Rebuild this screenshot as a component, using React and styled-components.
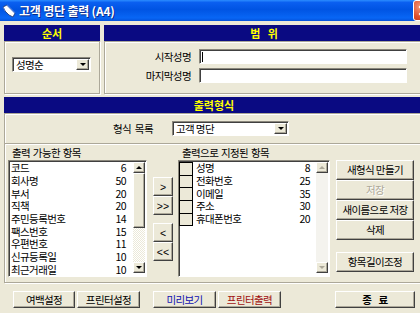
import React from 'react';
import styled, { createGlobalStyle, css } from 'styled-components';

const available = [
  ['코드', 6],
  ['회사명', 50],
  ['부서', 20],
  ['직책', 20],
  ['주민등록번호', 14],
  ['팩스번호', 15],
  ['우편번호', 11],
  ['신규등록일', 10],
  ['최근거래일', 10],
];

const selected = [
  ['성명', 8],
  ['전화번호', 25],
  ['이메일', 35],
  ['주소', 30],
  ['휴대폰번호', 20],
];

const GlobalStyle = createGlobalStyle`
  html, body {
    margin: 0;
    padding: 0;
    overflow: hidden;
    background: #ece9d8;
  }
  body {
    font-family: "Noto Sans CJK KR", "Noto Sans", sans-serif;
    font-size: 10.5px;
    line-height: 12px;
    letter-spacing: -0.6px;
    color: #000;
  }
  #root {
    width: 420px;
    height: 313px;
    overflow: hidden;
  }
  * { box-sizing: border-box; }
`;

const Window = styled.div`
  width: 440px;
  height: 313px;
  display: flex;
  flex-direction: column;
  background: #ece9d8;
`;

const TitleBar = styled.div`
  height: 21px;
  display: flex;
  align-items: center;
  gap: 3px;
  padding: 0 6px 0 2px;
  background: linear-gradient(
    to bottom,
    #2b8cff 0%,
    #0a5ff0 12%,
    #0054e3 45%,
    #0866f5 85%,
    #0453dd 100%
  );
`;

const TitleText = styled.span`
  flex: 1;
  color: #fff;
  font-weight: bold;
  font-size: 12px;
  letter-spacing: -0.2px;
  text-shadow: 1px 1px #0a2a8a;
`;

const CloseButton = styled.div`
  width: 21px;
  height: 21px;
  border: 1px solid #fff;
  border-radius: 3px;
  background: radial-gradient(circle at 35% 30%, #f29a7a, #e0512e 55%, #c1361a);
  display: flex;
  align-items: center;
  justify-content: center;
`;

const Body = styled.div`
  width: 424px;
  padding: 4px 0 0 4px;
  display: flex;
  flex-direction: column;
`;

const TopRow = styled.div`
  display: flex;
  gap: 4px;
  height: 69px;
`;

const Panel = styled.div`
  display: flex;
  flex-direction: column;
  width: ${(p) => (p.$w ? `${p.$w}px` : 'auto')};
  flex: ${(p) => (p.$w ? 'none' : '1')};
  margin-top: ${(p) => p.$mt || 0}px;
`;

const PanelHeader = styled.div`
  height: 16px;
  background: #0a0a82;
  color: #ffff00;
  font-weight: bold;
  font-size: 11px;
  letter-spacing: 0;
  display: flex;
  align-items: center;
  justify-content: center;
  white-space: pre;
`;

const PanelBody = styled.div`
  flex: 1;
  border: 1px solid #aca899;
  box-shadow: inset 1px 1px #fff, 1px 1px #fff;
  display: flex;
  flex-direction: column;
  padding: ${(p) => p.$pad || '0'};
  gap: ${(p) => p.$gap || 0}px;
`;

const sunken = css`
  background: #fff;
  border: 1px solid;
  border-color: #8a877c #fff #fff #8a877c;
  box-shadow: inset 1px 1px #404040;
`;

const Combo = styled.div`
  ${sunken};
  width: ${(p) => p.$w}px;
  height: 15px;
  display: flex;
  align-items: center;
  padding: 1px 1px 1px 3px;
`;

const ComboText = styled.span`
  flex: 1;
`;

const raised = css`
  background: #ece9d8;
  border: 1px solid;
  border-color: #fff #404040 #404040 #fff;
  box-shadow: inset -1px -1px #aca899;
`;

const DropButton = styled.span`
  ${raised};
  width: 13px;
  height: 11px;
  display: flex;
  align-items: center;
  justify-content: center;
`;

const Triangle = styled.span`
  width: 0;
  height: 0;
  border-left: 3px solid transparent;
  border-right: 3px solid transparent;
  ${(p) =>
    p.$up
      ? css`border-bottom: 3px solid ${p.$off ? '#aca899' : '#000'};`
      : css`border-top: 3px solid ${p.$off ? '#aca899' : '#000'};`}
`;

const FieldRow = styled.div`
  display: flex;
  align-items: center;
  gap: 8px;
`;

const FieldLabel = styled.span`
  width: 86px;
  text-align: right;
`;

const TextBox = styled.div`
  ${sunken};
  width: 208px;
  height: 15px;
  display: flex;
  align-items: center;
  padding-left: 2px;
`;

const Caret = styled.span`
  width: 1px;
  height: 10px;
  background: #000;
`;

const FormatRow = styled.div`
  display: flex;
  align-items: center;
  height: 15px;
  margin-top: 7px;
  padding-left: 108px;
`;

const FormatLabel = styled.span`
  width: 59px;
  word-spacing: 2px;
`;

const Separator = styled.div`
  height: 2px;
  margin-top: 7px;
  border-top: 1px solid #aca899;
  border-bottom: 1px solid #fff;
`;

const ListsRow = styled.div`
  display: flex;
  padding-left: 3px;
`;

const Column = styled.div`
  width: ${(p) => p.$w}px;
  margin-right: ${(p) => p.$mr || 0}px;
  display: flex;
  flex-direction: column;
  padding-top: ${(p) => p.$pt || 0}px;
  gap: ${(p) => p.$gap || 0}px;
`;

const ColumnLabel = styled.div`
  height: 15px;
  line-height: 15px;
  padding-left: 4px;
  word-spacing: 1px;
`;

const ListBox = styled.div`
  ${sunken};
  height: 117px;
  display: flex;
`;

const ListRows = styled.div`
  flex: 1;
  padding: 1px ${(p) => p.$pr}px 0 ${(p) => p.$pl}px;
`;

const Item = styled.div`
  height: 12.7px;
  line-height: 12px;
  display: flex;
  align-items: center;
`;

const ItemName = styled.span`
  flex: 1;
`;

const CheckCell = styled.span`
  width: 14px;
  height: 13.7px;
  margin-bottom: -1px;
  border: 1px solid #000;
  background: #ece9d8;
  margin-right: 3px;
  align-self: flex-start;
`;

const ScrollBar = styled.div`
  width: 12px;
  display: flex;
  flex-direction: column;
  padding: 1px 0 3px;
  margin-right: 1px;
`;

const ScrollArrow = styled.div`
  ${raised};
  height: 11px;
  display: flex;
  align-items: center;
  justify-content: center;
`;

const ScrollThumb = styled.div`
  ${raised};
  height: 55px;
`;

const ScrollTrack = styled.div`
  flex: 1;
  background: ${(p) =>
    p.$off
      ? '#f4f3ee'
      : 'repeating-conic-gradient(#ece9d8 0 25%, #fff 0 50%) 0 0 / 2px 2px'};
`;

const Button = styled.button`
  ${raised};
  width: ${(p) => p.$w || 78}px;
  height: ${(p) => p.$h || 20}px;
  margin: 0;
  padding: 0;
  font-family: ${(p) =>
    p.$latin ? '"Liberation Sans", sans-serif' : '"Noto Sans CJK KR", sans-serif'};
  font-size: 10.5px;
  line-height: 12px;
  letter-spacing: ${(p) => (p.$latin ? '0' : '-0.6px')};
  font-weight: ${(p) => (p.$bold ? 'bold' : 'normal')};
  color: ${(p) => p.$color || '#000'};
  white-space: pre;
  ${(p) =>
    p.disabled &&
    css`
      color: #aca899;
      text-shadow: 1px 1px #fff;
    `}
`;

const ArrowGroup = styled.div`
  display: flex;
  flex-direction: column;
`;

const Footer = styled.div`
  display: flex;
  align-items: center;
  margin-top: 8px;
  padding: 0 9px;
  height: 17px;
`;

const ButtonPair = styled.div`
  display: flex;
  gap: 2px;
  margin-right: ${(p) => p.$mr || 0}px;
`;

const Spacer = styled.div`
  flex: 1;
`;

const AppIcon = () => (
  <svg width="14" height="14" viewBox="0 0 14 14">
    <path d="M1 3 L5 1 L13 9 L11 13 L7 11 L3 7 Z" fill="#fff" stroke="#1a2f6a" strokeWidth="0.8" />
    <path d="M5 1 L13 9" stroke="#4a7ad8" strokeWidth="1.2" />
    <path d="M1 3 L3 7" stroke="#4a7ad8" strokeWidth="1" />
  </svg>
);

const CloseX = () => (
  <svg width="11" height="11" viewBox="0 0 11 11">
    <path d="M2 2 L9 9 M9 2 L2 9" stroke="#fff" strokeWidth="2" strokeLinecap="square" />
  </svg>
);

export default function App() {
  return (
    <>
      <GlobalStyle />
      <Window>
        <TitleBar>
          <AppIcon />
          <TitleText>고객 명단 출력 (A4)</TitleText>
          <CloseButton>
            <CloseX />
          </CloseButton>
        </TitleBar>
        <Body>
          <TopRow>
            <Panel $w={96}>
              <PanelHeader>순서</PanelHeader>
              <PanelBody $pad="15px 0 0 7px">
                <Combo $w={79}>
                  <ComboText>성명순</ComboText>
                  <DropButton>
                    <Triangle />
                  </DropButton>
                </Combo>
              </PanelBody>
            </Panel>
            <Panel>
              <PanelHeader>{'범   위'}</PanelHeader>
              <PanelBody $pad="7px 0 0 0" $gap={4}>
                <FieldRow>
                  <FieldLabel>시작성명</FieldLabel>
                  <TextBox>
                    <Caret />
                  </TextBox>
                </FieldRow>
                <FieldRow>
                  <FieldLabel>마지막성명</FieldLabel>
                  <TextBox />
                </FieldRow>
              </PanelBody>
            </Panel>
          </TopRow>

          <Panel $mt={3}>
            <PanelHeader>출력형식</PanelHeader>
            <PanelBody $pad="0 0 5px 0">
              <FormatRow>
                <FormatLabel>형식 목록</FormatLabel>
                <Combo $w={117}>
                  <ComboText>고객 명단</ComboText>
                  <DropButton>
                    <Triangle />
                  </DropButton>
                </Combo>
              </FormatRow>
              <Separator />
              <ListsRow>
                <Column $w={139} $mr={6}>
                  <ColumnLabel>출력 가능한 항목</ColumnLabel>
                  <ListBox>
                    <ListRows $pl={2} $pr={7}>
                      {available.map(([name, size]) => (
                        <Item key={name}>
                          <ItemName>{name}</ItemName>
                          <span>{size}</span>
                        </Item>
                      ))}
                    </ListRows>
                    <ScrollBar>
                      <ScrollArrow>
                        <Triangle $up />
                      </ScrollArrow>
                      <ScrollThumb />
                      <ScrollTrack />
                      <ScrollArrow>
                        <Triangle />
                      </ScrollArrow>
                    </ScrollBar>
                  </ListBox>
                </Column>

                <Column $w={20} $mr={5} $pt={32} $gap={8}>
                  <ArrowGroup>
                    <Button $w={20} $h={19} $latin>{'>'}</Button>
                    <Button $w={20} $h={19} $latin>{'>>'}</Button>
                  </ArrowGroup>
                  <ArrowGroup>
                    <Button $w={20} $h={19} $latin>{'<'}</Button>
                    <Button $w={20} $h={19} $latin>{'<<'}</Button>
                  </ArrowGroup>
                </Column>

                <Column $w={152} $mr={6}>
                  <ColumnLabel>출력으로 지정된 항목</ColumnLabel>
                  <ListBox>
                    <ListRows $pl={0} $pr={6}>
                      {selected.map(([name, size]) => (
                        <Item key={name}>
                          <CheckCell />
                          <ItemName>{name}</ItemName>
                          <span>{size}</span>
                        </Item>
                      ))}
                    </ListRows>
                    <ScrollBar>
                      <ScrollArrow>
                        <Triangle $up $off />
                      </ScrollArrow>
                      <ScrollTrack $off />
                      <ScrollArrow>
                        <Triangle $off />
                      </ScrollArrow>
                    </ScrollBar>
                  </ListBox>
                </Column>

                <Column $w={78} $pt={15} $gap={12}>
                  <ArrowGroup>
                    <Button>새형식 만들기</Button>
                    <Button disabled>저장</Button>
                    <Button>새이름으로 저장</Button>
                    <Button>삭제</Button>
                  </ArrowGroup>
                  <Button>항목길이조정</Button>
                </Column>
              </ListsRow>
            </PanelBody>
          </Panel>

          <Footer>
            <ButtonPair $mr={13}>
              <Button $w={62} $h={17}>여백설정</Button>
              <Button $w={63} $h={17}>프린터설정</Button>
            </ButtonPair>
            <ButtonPair>
              <Button $w={63} $h={17} $color="#1010b0">미리보기</Button>
              <Button $w={63} $h={17} $color="#a01010">프린터출력</Button>
            </ButtonPair>
            <Spacer />
            <Button $w={80} $h={17} $bold>{'종    료'}</Button>
          </Footer>
        </Body>
      </Window>
    </>
  );
}
